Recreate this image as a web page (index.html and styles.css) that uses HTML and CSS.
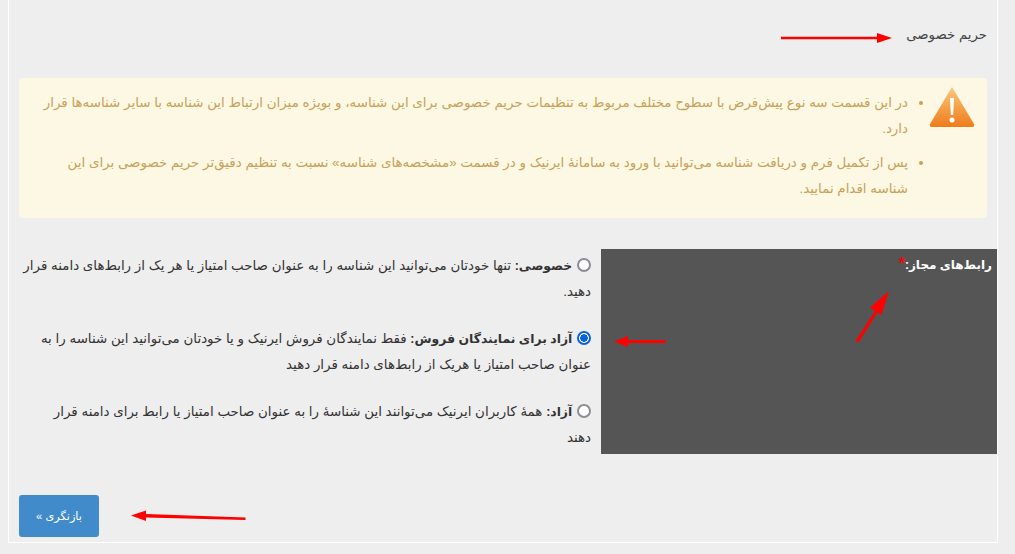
FILE: index.html
```html
<!DOCTYPE html>
<html lang="fa" dir="rtl">

<head>
    <meta charset="UTF-8">
    <title>حریم خصوصی</title>
    <link rel="stylesheet" href="styles.css">
</head>

<body>
    <div class="panel">
        <h2 class="title">حریم خصوصی</h2>

        <div class="alert">
            <svg class="alert-icon" width="46" height="42" viewBox="0 0 46 42">
                <defs>
                    <linearGradient id="warn" x1="0" y1="0" x2="0" y2="1">
                        <stop offset="0" stop-color="#fdc77e"/>
                        <stop offset="1" stop-color="#ee7c1b"/>
                    </linearGradient>
                </defs>
                <path d="M23 1 L45 38 Q46 41 43 41 L3 41 Q0 41 1 38 Z" fill="url(#warn)"/>
                <path d="M21 12 L25 12 L24.2 29 L21.8 29 Z" fill="#fff"/>
                <circle cx="23" cy="34" r="2.5" fill="#fff"/>
            </svg>
            <ul class="alert-list">
                <li>در این قسمت سه نوع پیش‌فرض با سطوح مختلف مربوط به تنظیمات حریم خصوصی برای این شناسه، و بویژه میزان ارتباط این شناسه با سایر شناسه‌ها قرار دارد.</li>
                <li>پس از تکمیل فرم و دریافت شناسه می‌توانید با ورود به سامانهٔ ایرنیک و در قسمت «مشخصه‌های شناسه» نسبت به تنظیم دقیق‌تر حریم خصوصی برای این شناسه اقدام نمایید.</li>
            </ul>
        </div>

        <div class="field">
            <div class="field-label">رابط‌های مجاز:<span class="required">*</span></div>
            <div class="options">
                <label class="option">
                    <input type="radio" name="links">
                    <b>خصوصی:</b> تنها خودتان می‌توانید این شناسه را به عنوان صاحب امتیاز یا هر یک از رابط‌های دامنه قرار دهید.
                </label>
                <label class="option">
                    <input type="radio" name="links" checked>
                    <b>آزاد برای نمایندگان فروش:</b> فقط نمایندگان فروش ایرنیک و یا خودتان می‌توانید این شناسه را به عنوان صاحب امتیاز یا هریک از رابط‌های دامنه قرار دهید
                </label>
                <label class="option">
                    <input type="radio" name="links">
                    <b>آزاد:</b> همهٔ کاربران ایرنیک می‌توانند این شناسهٔ را به عنوان صاحب امتیاز یا رابط برای دامنه قرار<br>دهند
                </label>
            </div>
        </div>

        <div class="actions">
            <button class="review-btn">بازنگری »</button>
        </div>
    </div>

    <!-- Red arrows drawn over the screenshot -->
    <svg class="arrows" width="1015" height="554" viewBox="0 0 1015 554">
        <g fill="#f00" stroke="none">
            <path d="M781 36.800 H877 V33 L892 38 L877 43 V39.200 H781 Z"/>
            <path d="M665.500 340 V343 H628 V347 L614 341.500 L628 336 V340 Z"/>
            <path d="M855.500 341 L875 311 L870 307.500 L889 291 L881.500 315 L877.500 312.500 L858.500 342.500 Z"/>
            <path d="M245.500 517.500 L245.500 520 L146 517.500 L146 521 L131 515.500 L146 510.500 L146 514 Z"/>
        </g>
    </svg>
</body>

</html>
```

FILE: styles.css
```css
html,
body {
    height: 100%;
}

body {
    margin: 0;
    padding: 0;
    background-color: #eee;
    font-family: 'Liberation Sans', 'DejaVu Sans', sans-serif;
    font-size: 13.4px;
    color: #333;
    overflow: hidden;
    position: relative;
}

.panel {
    box-sizing: border-box;
    width: 990px;
    height: 543px;
    margin-right: 17px;
    border: 1px solid #fff;
    border-top: none;
    padding: 0 10px 0;
}

.title {
    margin: 0;
    padding-top: 25px;
    height: 54px;
    box-sizing: border-box;
    line-height: 20px;
    font-size: 13.3px;
    font-weight: normal;
    color: #444;
}

.alert {
    display: flex;
    box-sizing: border-box;
    height: 140px;
    margin-top: 24px;
    padding: 8px 12px 0 20px;
    background-color: #fcf8e3;
    border-radius: 4px;
    color: #c8a15a;
}

.alert-icon {
    flex: none;
    margin-left: 21px;
}

.alert-list {
    margin: 4px 0 0;
    padding: 0;
    line-height: 26px;
}

.alert-list li {
    margin-bottom: 8px;
}

.field {
    display: flex;
    margin-top: 31px;
    margin-right: -10px;
    height: 205px;
}

.field-label {
    flex: none;
    box-sizing: border-box;
    width: 396px;
    padding: 2px 5px 0 0;
    line-height: 26px;
    background-color: #555;
    color: #fff;
    font-size: 12px;
    font-weight: bold;
}

.required {
    color: #f00;
    font-size: 16px;
}

.options {
    flex: 1;
    display: flex;
    flex-direction: column;
    gap: 22px;
    padding: 4px 10px 0 4px;
}

.option {
    display: block;
    line-height: 25px;
}

.option b {
    font-size: 12.4px;
}

.option input {
    appearance: none;
    box-sizing: border-box;
    width: 14px;
    height: 14px;
    margin: 0 0 0 1px;
    border: 2px solid #8f8b96;
    border-radius: 50%;
    background-color: #fff;
    vertical-align: -2px;
}

.option input:checked {
    border-color: #0b62d6;
    background: radial-gradient(circle, #0b62d6 0, #0b62d6 3.5px, #fff 4px);
}

.actions {
    display: flex;
    justify-content: flex-end;
    margin-top: 41px;
}

.review-btn {
    width: 80px;
    height: 42px;
    border: none;
    border-radius: 3px;
    background-color: #428bca;
    color: #fff;
    font-family: inherit;
    font-size: 11.300px;
}

.arrows {
    position: absolute;
    top: 0;
    left: 0;
    pointer-events: none;
}
```
